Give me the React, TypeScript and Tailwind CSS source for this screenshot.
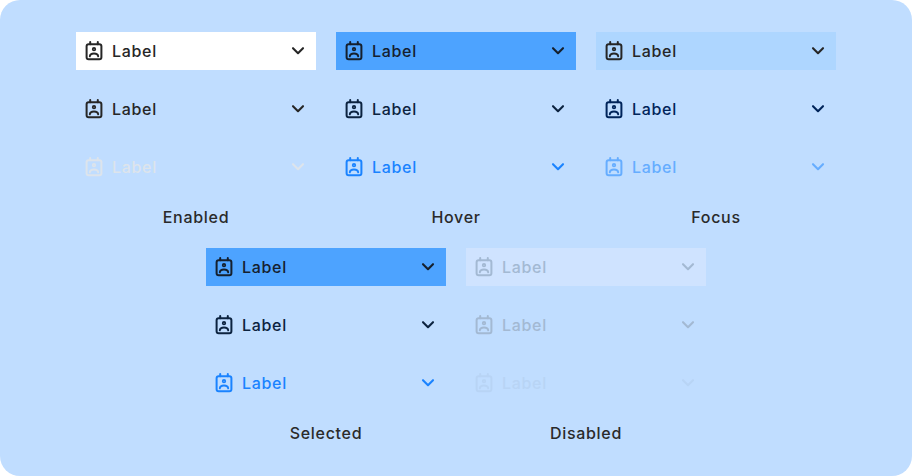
const FONT = "font-['Inter','Liberation_Sans',sans-serif]";

type RowStyle = {
  bg?: string;
  text: string;
};

function BadgeIcon() {
  return (
    <svg width="24" height="24" viewBox="0 0 24 24" fill="none" stroke="currentColor" strokeWidth="2" strokeLinecap="round" strokeLinejoin="round">
      <rect x="4.600" y="5.200" width="14.800" height="15" rx="2" />
      <path d="M8.200 3v2.200M15.800 3v2.200" />
      <circle cx="12" cy="10.200" r="1.300" strokeWidth="1.700" />
      <path d="M7.800 17.400c.2-1.900 2-2.900 4.200-2.900s4 1 4.200 2.900" strokeWidth="1.900" />
    </svg>
  );
}

function Chevron() {
  return (
    <svg width="24" height="24" viewBox="0 0 24 24" fill="none" stroke="currentColor" strokeWidth="2.100" strokeLinecap="round" strokeLinejoin="round">
      <path d="M7 9.200l5 5 5-5" />
    </svg>
  );
}

function Row({ bg = "", text }: RowStyle) {
  return (
    <div className={`flex h-[38px] w-[240px] items-center justify-between px-[6px] ${bg} ${text}`}>
      <div className="flex items-center gap-[6px]">
        <BadgeIcon />
        <span className="text-[16px] font-medium tracking-[0.7px]">Label</span>
      </div>
      <Chevron />
    </div>
  );
}

function Group({ title, rows }: { title: string; rows: RowStyle[] }) {
  return (
    <div className="flex w-[240px] flex-col items-center">
      <div className="flex flex-col gap-[20px]">
        {rows.map((r, i) => (
          <Row key={i} {...r} />
        ))}
      </div>
      <div className="mt-[21px] h-[20px] text-[16px] leading-[20px] font-medium tracking-[0.7px] text-[#2a2a2a]">{title}</div>
    </div>
  );
}

export default function App() {
  return (
    <div className={`h-[476px] w-[912px] bg-white ${FONT}`}>
      <div className="flex h-full flex-col items-center gap-[21px] rounded-[20px] bg-[#c0ddff] pt-[32px]">
        <div className="flex gap-[20px]">
          <Group
            title="Enabled"
            rows={[
              { bg: "bg-white", text: "text-[#262626]" },
              { text: "text-[#262626]" },
              { text: "text-[#dde4ec]" },
            ]}
          />
          <Group
            title="Hover"
            rows={[
              { bg: "bg-[#4da3ff]", text: "text-[#15202e]" },
              { text: "text-[#0c2340]" },
              { text: "text-[#1a83ff]" },
            ]}
          />
          <Group
            title="Focus"
            rows={[
              { bg: "bg-[#aed6ff]", text: "text-[#262626]" },
              { text: "text-[#00245a]" },
              { text: "text-[#66adff]" },
            ]}
          />
        </div>
        <div className="flex gap-[20px]">
          <Group
            title="Selected"
            rows={[
              { bg: "bg-[#4da3ff]", text: "text-[#15202e]" },
              { text: "text-[#0c2340]" },
              { text: "text-[#1a83ff]" },
            ]}
          />
          <Group
            title="Disabled"
            rows={[
              { bg: "bg-[#cfe3ff]", text: "text-[#a3b9d3]" },
              { text: "text-[#a3b9d3]" },
              { text: "text-[#b8d4f5]" },
            ]}
          />
        </div>
      </div>
    </div>
  );
}
